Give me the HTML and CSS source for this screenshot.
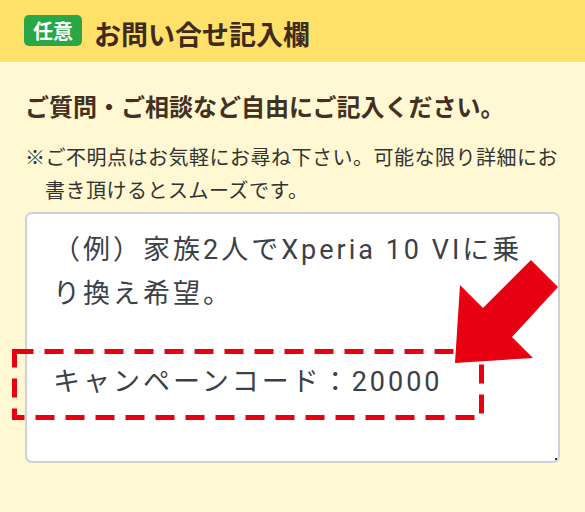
FILE: index.html
```html
<!DOCTYPE html>
<html lang="ja">
<head>
<meta charset="utf-8">
<title>お問い合せ記入欄</title>
<link rel="stylesheet" href="styles.css">
</head>
<body>
<header class="head">
  <span class="badge">任意</span>
  <h1 class="title">お問い合せ記入欄</h1>
</header>
<main class="content">
  <p class="lead">ご質問・ご相談など自由にご記入ください。</p>
  <p class="note">※ご不明点はお気軽にお尋ね下さい。可能な限り詳細にお<br>書き頂けるとスムーズです。</p>
  <div class="field">
    <textarea class="input" wrap="off" readonly>（例）家族2人でXperia 10 VIに乗
り換え希望。

キャンペーンコード：20000</textarea>
    <svg class="mark" viewBox="0 0 585 512" width="585" height="512" aria-hidden="true">
      <rect x="14.5" y="351.5" width="467" height="66" fill="none" stroke="#e60012" stroke-width="5" stroke-dasharray="19 11"/>
      <polygon points="531,260 558,287 512,337 533,358 455,363 460,285 483,308" fill="#e60012"/>
    </svg>
  </div>
</main>
</body>
</html>
```
FILE: styles.css
```css
html, body {
  margin: 0;
  padding: 0;
}
body {
  width: 585px;
  height: 512px;
  overflow: hidden;
  background: #fff8d2;
  font-family: "Noto Sans CJK JP", "Noto Sans", sans-serif;
}
.head {
  height: 62px;
  background: #ffe069;
  display: flex;
  align-items: center;
  gap: 12px;
  padding-left: 24px;
  box-sizing: border-box;
}
.badge {
  display: inline-block;
  height: 31px;
  line-height: 31px;
  padding: 0 9px;
  background: #29a645;
  color: #fff;
  font-size: 20px;
  font-weight: 700;
  border-radius: 5px;
  margin-top: -1px;
}
.title {
  margin: 5px 0 0;
  font-size: 27px;
  font-weight: 700;
  line-height: 1;
  color: #3e2b1e;
}
.content {
  padding: 26px 25px 0 25px;
}
.lead {
  margin: 0;
  font-size: 24px;
  line-height: 36px;
  font-weight: 700;
  color: #43301f;
}
.note {
  margin: 16px 0 0;
  font-size: 20px;
  line-height: 33px;
  letter-spacing: 0.5px;
  color: #333;
  padding-left: 1em;
  text-indent: -1em;
  white-space: nowrap;
}
.field {
  position: relative;
  margin-top: 6px;
  width: 535px;
  height: 251px;
}
.field::after {
  content: "";
  position: absolute;
  right: 3px;
  bottom: 3px;
  width: 2px;
  height: 2px;
  background: #333;
}
.input {
  display: block;
  box-sizing: border-box;
  width: 535px;
  height: 251px;
  margin: 0;
  padding: 14px 10px 10px 26px;
  border: 2px solid #cdd1d9;
  border-radius: 7px;
  background: #fff;
  color: #3b4048;
  font-family: Roboto, "Noto Sans CJK JP", sans-serif;
  font-size: 27px;
  line-height: 44px;
  letter-spacing: 3px;
  resize: none;
  overflow: hidden;
  white-space: pre;
  outline: none;
}
.mark {
  position: absolute;
  left: -25px;
  top: -212px;
  pointer-events: none;
}
```
